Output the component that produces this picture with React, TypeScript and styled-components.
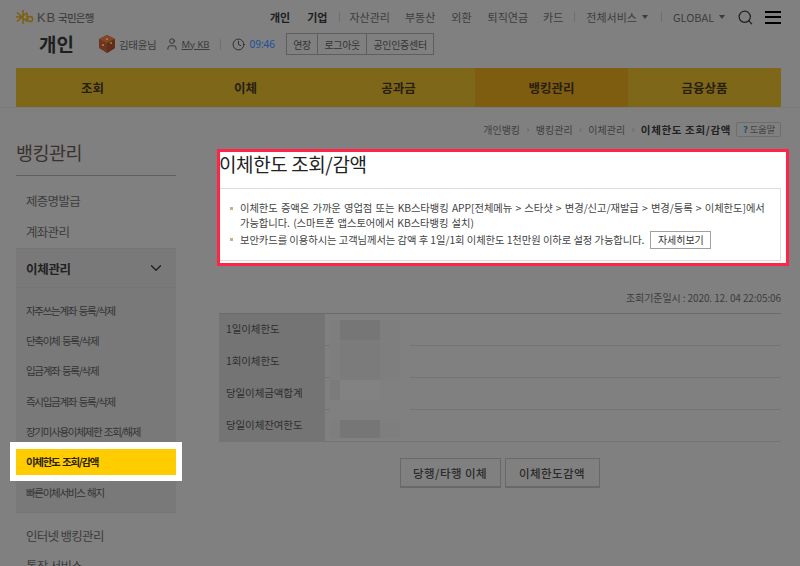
import styled, { createGlobalStyle } from 'styled-components';
import { ChevronDown, Clock, Search, User } from 'lucide-react';

const GlobalStyle = createGlobalStyle`
  html, body {
    margin: 0;
    padding: 0;
    background: #808080;
  }
  * {
    box-sizing: border-box;
  }
`;

const Page = styled.div`
  width: 800px;
  height: 566px;
  overflow: hidden;
  background: #808080;
  font-family: "Noto Sans CJK KR", "Noto Sans", sans-serif;
  color: #333;
`;

const TopRow = styled.div`
  display: flex;
  align-items: center;
  height: 33px;
  padding: 1px 19px 0 16px;
`;

const Logo = styled.div`
  display: flex;
  align-items: center;
  flex-shrink: 0;
  gap: 2px;
  width: 254px;
  color: #3f3f3f;
`;

const LogoKB = styled.span`
  font-family: "Liberation Sans", sans-serif;
  font-size: 13px;
  letter-spacing: 0.8px;
  margin-left: 1px;
`;

const LogoName = styled.span`
  font-size: 10.5px;
  font-weight: 500;
  letter-spacing: -0.7px;
`;

const TopLink = styled.span<{ $gap?: number; $bold?: boolean }>`
  margin-left: ${(p) => p.$gap ?? 16}px;
  font-size: 11px;
  line-height: 16px;
  white-space: nowrap;
  font-weight: ${(p) => (p.$bold ? 700 : 400)};
  color: ${(p) => (p.$bold ? '#1e1e1e' : '#3c3c3c')};
`;

const Separator = styled.i<{ $gap: number; $height?: number }>`
  display: block;
  width: 1px;
  height: ${(p) => p.$height ?? 10}px;
  margin-left: ${(p) => p.$gap}px;
  background: #6f6f6f;
`;

const Caret = styled.i`
  display: block;
  width: 0;
  height: 0;
  margin-left: 5px;
  border-left: 3px solid transparent;
  border-right: 3px solid transparent;
  border-top: 4px solid #3c3c3c;
`;

const SearchIcon = styled(Search)`
  margin-left: 12px;
  color: #1e1e1e;
`;

const MenuIcon = styled.div`
  display: flex;
  flex-direction: column;
  justify-content: space-between;
  width: 16px;
  height: 13px;
  margin-left: 11px;
  span {
    height: 2px;
    background: #000;
  }
`;

const UserRow = styled.div`
  display: flex;
  align-items: center;
  height: 35px;
  padding: 0 0 13px 39px;
`;

const PageKind = styled.strong`
  width: 58px;
  font-size: 19px;
  line-height: 24px;
  font-weight: 700;
  color: #1f1f1f;
`;

const UserName = styled.span`
  margin-left: 2px;
  font-size: 10.5px;
  letter-spacing: -0.3px;
  color: #3a3a3a;
`;

const PersonIcon = styled(User)`
  margin-left: 9px;
  color: #2c2c2c;
`;

const MyKb = styled.span`
  margin-left: 2px;
  font-family: "Noto Sans", sans-serif;
  font-size: 9.5px;
  color: #3c3c3c;
  text-decoration: underline;
`;

const ClockIcon = styled(Clock)`
  margin-left: 11px;
  color: #222;
`;

const Time = styled.span`
  margin-left: 4px;
  font-family: "Noto Sans", sans-serif;
  font-size: 10px;
  color: #1c4f9c;
`;

const SessionGroup = styled.div`
  display: flex;
  height: 22px;
  margin-left: 11px;
  border: 1px solid #5e5e5e;
`;

const SessionButton = styled.span`
  display: flex;
  align-items: center;
  padding: 0 6.2px;
  font-size: 10px;
  letter-spacing: -0.3px;
  color: #333;
  & + & {
    border-left: 1px solid #5e5e5e;
  }
`;

const MainNav = styled.nav`
  display: grid;
  grid-template-columns: repeat(5, 153px);
  height: 39px;
  margin-left: 16px;
`;

const NavItem = styled.div<{ $active?: boolean }>`
  display: flex;
  align-items: center;
  justify-content: center;
  font-size: 12.5px;
  font-weight: 700;
  color: #262010;
  background: ${(p) => (p.$active ? '#7f5d10' : '#7f671a')};
`;

const Body = styled.div`
  display: flex;
  border-top: 1px solid #7a7a7a;
`;

const Sidebar = styled.aside`
  width: 160px;
  margin: 28px 0 0 16px;
  flex-shrink: 0;
`;

const SideTitle = styled.h2`
  margin: 0;
  height: 40px;
  font-size: 18.5px;
  line-height: 32px;
  font-weight: 400;
  letter-spacing: -0.5px;
  color: #3a302c;
  border-bottom: 1px solid #5f5f5f;
`;

const SideLink = styled.div`
  display: flex;
  align-items: center;
  height: 31px;
  padding-left: 10px;
  font-size: 12.5px;
  letter-spacing: -0.7px;
  color: #3c3c3c;
`;

const SideLinks = styled.div`
  padding: 9px 0 1px;
`;

const SubPanel = styled.div`
  background: #797979;
  border-top: 1px solid #757575;
  border-bottom: 1px solid #767676;
  height: 265px;
`;

const SubHead = styled.div`
  display: flex;
  align-items: center;
  justify-content: space-between;
  height: 39px;
  padding: 0 11px 0 10px;
  font-size: 12.5px;
  font-weight: 700;
  letter-spacing: -0.3px;
  color: #222;
  border-bottom: 1px solid #747474;
`;

const SubList = styled.ul`
  margin: 0;
  padding: 7px 0 0;
  list-style: none;
`;

const SubItem = styled.li<{ $active?: boolean }>`
  display: flex;
  align-items: center;
  height: ${(p) => (p.$active ? 26 : 30.4)}px;
  margin: ${(p) => (p.$active ? '2px 0' : '0')};
  padding-left: 10px;
  font-size: 10.5px;
  letter-spacing: -1.3px;
  word-spacing: 1.5px;
  white-space: nowrap;
  font-weight: ${(p) => (p.$active ? 700 : 400)};
  color: ${(p) => (p.$active ? '#2b2300' : '#333')};
  background: ${(p) => (p.$active ? '#ffcc00' : 'transparent')};
  box-shadow: ${(p) => (p.$active ? '0 0 0 6px #fff, 0 -1px 0 6px #fff' : 'none')};
`;

const SideLower = styled.div`
  padding-top: 7px;
  div {
    height: 30px;
  }
`;

const Main = styled.main`
  width: 572px;
  margin-left: 41px;
  flex-shrink: 0;
`;

const Crumbs = styled.div`
  display: flex;
  align-items: center;
  justify-content: flex-end;
  height: 14px;
  margin: 14px 8px 0 0;
  font-size: 10px;
  color: #3e3e3e;
`;

const CrumbArrow = styled.span`
  margin: 0 6.5px;
  font-size: 9px;
  color: #5c5c5c;
`;

const CrumbCurrent = styled.strong`
  font-size: 10.5px;
  font-weight: 700;
  letter-spacing: 0.65px;
  color: #222;
`;

const HelpButton = styled.span`
  display: flex;
  align-items: center;
  gap: 2px;
  height: 15px;
  margin-left: 5px;
  padding: 0 5px 0 6px;
  font-size: 9.5px;
  letter-spacing: -0.3px;
  color: #444;
  border: 1px solid #6e6e6e;
  border-radius: 2px;
  b {
    color: #10506e;
  }
`;

const Callout = styled.section`
  height: 117px;
  margin-top: 13px;
  padding: 0 5px 0 0;
  background: #fff;
  border: 3px solid #ff2448;
`;

const CalloutTitle = styled.h1`
  margin: 0 0 0 -1px;
  height: 36px;
  font-size: 19px;
  line-height: 24px;
  font-weight: 400;
  letter-spacing: -0.4px;
  color: #222;
  white-space: nowrap;
`;

const Notice = styled.ul`
  height: 73px;
  margin: 0;
  padding: 11px 8px 0 10px;
  list-style: none;
  border: 1px solid #ddd;
  border-left: 0;
`;

const NoticeItem = styled.li`
  position: relative;
  padding-left: 10px;
  font-size: 10.3px;
  line-height: 15px;
  letter-spacing: -0.05px;
  word-break: keep-all;
  color: #444;
  &::before {
    content: '';
    position: absolute;
    left: 0;
    top: 7px;
    width: 3px;
    height: 3px;
    background: #c9b187;
  }
  &:first-child {
    word-spacing: 1px;
  }
  & + & {
    margin-top: 1px;
  }
`;

const DetailButton = styled.span`
  display: inline-block;
  margin-left: 6px;
  padding: 0 6.5px;
  height: 18px;
  line-height: 16px;
  font-size: 10px;
  color: #333;
  border: 1px solid #a0a0a0;
  background: #fff;
`;

const AsOf = styled.div`
  height: 47px;
  padding: 25px 8px 0 0;
  text-align: right;
  font-size: 10px;
  line-height: 14px;
  letter-spacing: -0.1px;
  color: #3d3d3d;
`;

const LimitTable = styled.div`
  position: relative;
  width: 562px;
  margin-left: 2px;
  border-top: 1px solid #6b6b6b;
`;

const LimitRow = styled.div`
  display: flex;
  height: 32px;
  border-bottom: 1px solid #747474;
  &:last-of-type {
    height: 31px;
  }
`;

const LimitLabel = styled.div`
  display: flex;
  align-items: center;
  width: 106px;
  padding: 0 0 3px 7px;
  font-size: 10.5px;
  letter-spacing: -0.1px;
  color: #2e2e2e;
  background: #747474;
`;

const Mosaic = styled.div`
  position: absolute;
  top: 6px;
  left: 111px;
  display: grid;
  grid-template-columns: 10px 40px 20px 10px;
  grid-template-rows: 20px 40px 20px 20px 18px;
`;

const MosaicCell = styled.i<{ $tone: string }>`
  display: block;
  background: ${(p) => p.$tone};
`;

const ButtonRow = styled.div`
  display: flex;
  justify-content: center;
  gap: 4px;
  margin: 16px 0 0 -7px;
`;

const ActionButton = styled.span<{ $width: number }>`
  display: flex;
  align-items: center;
  justify-content: center;
  width: ${(p) => p.$width}px;
  height: 30px;
  font-size: 11.5px;
  font-weight: 500;
  letter-spacing: 0.4px;
  color: #2b2b2b;
  border: 1px solid #696969;
  border-bottom-width: 2px;
`;

const BG = '#808080';
const DARK = '#767676';
const MID = '#7b7b7b';
const SOFT = '#7e7e7e';
const PALE = '#828282';

const mosaicTones = [
  [SOFT, DARK, SOFT, BG],
  [SOFT, MID, SOFT, BG],
  [MID, PALE, BG, BG],
  [BG, BG, BG, BG],
  [SOFT, DARK, SOFT, BG],
];

const subMenu = [
  '자주쓰는계좌 등록/삭제',
  '단축이체 등록/삭제',
  '입금계좌 등록/삭제',
  '즉시입금계좌 등록/삭제',
  '장기미사용이체제한 조회/해제',
  '이체한도 조회/감액',
  '빠른이체서비스 해지',
];

const limits = ['1일이체한도', '1회이체한도', '당일이체금액합계', '당일이체잔여한도'];

const App = () => {
  return (
    <Page>
      <GlobalStyle />
      <header>
        <TopRow>
          <Logo>
            <svg width="18" height="14" viewBox="0 0 18 14" fill="none" stroke="#7c5f10" strokeWidth="1.5">
              <path d="M7 0v14M1 2.5l10 9M1 11.5l10-9M0 7h7" />
              <path d="M11 3v7.2" />
              <circle cx="14" cy="9" r="2.6" />
            </svg>
            <LogoKB>KB</LogoKB>
            <LogoName>국민은행</LogoName>
          </Logo>
          <TopLink $gap={0} $bold>개인</TopLink>
          <TopLink $gap={17} $bold>기업</TopLink>
          <Separator $gap={11} />
          <TopLink $gap={10}>자산관리</TopLink>
          <TopLink $gap={15}>부동산</TopLink>
          <TopLink>외환</TopLink>
          <TopLink>퇴직연금</TopLink>
          <TopLink $gap={15}>카드</TopLink>
          <Separator $gap={11} />
          <TopLink $gap={11}>전체서비스</TopLink>
          <Caret />
          <Separator $gap={13} />
          <TopLink $gap={11}>GLOBAL</TopLink>
          <Caret />
          <SearchIcon size={17} strokeWidth={1.7} />
          <MenuIcon>
            <span />
            <span />
            <span />
          </MenuIcon>
        </TopRow>
        <UserRow>
          <PageKind>개인</PageKind>
          <svg width="20" height="20" viewBox="0 0 20 20">
            <path d="M10 1l8 4v9l-8 5-8-5V5z" fill="#6e3620" />
            <path d="M10 1l8 4-8 4-8-4z" fill="#83452a" />
            <path d="M10 9l8-4v9l-8 5z" fill="#5f2d1a" />
            <circle cx="6" cy="11" r="1" fill="#b58b4a" />
            <circle cx="14" cy="9" r="1" fill="#a8803f" />
            <circle cx="10" cy="5" r="0.9" fill="#b58b4a" />
          </svg>
          <UserName>김태윤님</UserName>
          <PersonIcon size={14} strokeWidth={1.5} />
          <MyKb>My KB</MyKb>
          <Separator $gap={11} $height={11} />
          <ClockIcon size={13} strokeWidth={1.6} />
          <Time>09:46</Time>
          <SessionGroup>
            <SessionButton>연장</SessionButton>
            <SessionButton>로그아웃</SessionButton>
            <SessionButton>공인인증센터</SessionButton>
          </SessionGroup>
        </UserRow>
        <MainNav>
          <NavItem>조회</NavItem>
          <NavItem>이체</NavItem>
          <NavItem>공과금</NavItem>
          <NavItem $active>뱅킹관리</NavItem>
          <NavItem>금융상품</NavItem>
        </MainNav>
      </header>
      <Body>
        <Sidebar>
          <SideTitle>뱅킹관리</SideTitle>
          <SideLinks>
            <SideLink>제증명발급</SideLink>
            <SideLink>계좌관리</SideLink>
          </SideLinks>
          <SubPanel>
            <SubHead>
              이체관리
              <ChevronDown size={18} strokeWidth={1.8} />
            </SubHead>
            <SubList>
              {subMenu.map((item) => (
                <SubItem key={item} $active={item === '이체한도 조회/감액'}>
                  {item}
                </SubItem>
              ))}
            </SubList>
          </SubPanel>
          <SideLower>
            <SideLink>인터넷 뱅킹관리</SideLink>
            <SideLink>통장 서비스</SideLink>
          </SideLower>
        </Sidebar>
        <Main>
          <Crumbs>
            개인뱅킹
            <CrumbArrow>›</CrumbArrow>
            뱅킹관리
            <CrumbArrow>›</CrumbArrow>
            이체관리
            <CrumbArrow>›</CrumbArrow>
            <CrumbCurrent>이체한도 조회/감액</CrumbCurrent>
            <HelpButton>
              <b>?</b>도움말
            </HelpButton>
          </Crumbs>
          <Callout>
            <CalloutTitle>이체한도 조회/감액</CalloutTitle>
            <Notice>
              <NoticeItem>
                이체한도 증액은 가까운 영업점 또는 KB스타뱅킹 APP[전체메뉴 &gt; 스타샷 &gt; 변경/신고/재발급 &gt; 변경/등록 &gt; 이체한도]에서 가능합니다. (스마트폰 앱스토어에서 KB스타뱅킹 설치)
              </NoticeItem>
              <NoticeItem>
                보안카드를 이용하시는 고객님께서는 감액 후 1일/1회 이체한도 1천만원 이하로 설정 가능합니다.
                <DetailButton>자세히보기</DetailButton>
              </NoticeItem>
            </Notice>
          </Callout>
          <AsOf>조회기준일시 : 2020. 12. 04 22:05:06</AsOf>
          <LimitTable>
            {limits.map((label) => (
              <LimitRow key={label}>
                <LimitLabel>{label}</LimitLabel>
              </LimitRow>
            ))}
            <Mosaic>
              {mosaicTones.flat().map((tone, i) => (
                <MosaicCell key={i} $tone={tone} />
              ))}
            </Mosaic>
          </LimitTable>
          <ButtonRow>
            <ActionButton $width={101}>당행/타행 이체</ActionButton>
            <ActionButton $width={95}>이체한도감액</ActionButton>
          </ButtonRow>
        </Main>
      </Body>
    </Page>
  );
};

export default App;
